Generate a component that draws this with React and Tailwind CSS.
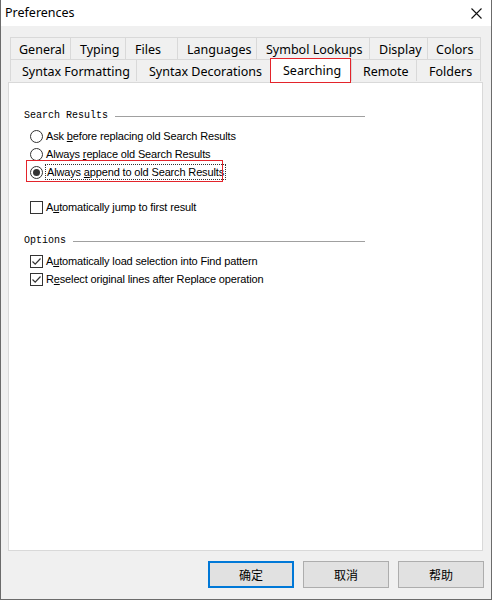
const rowOne = [
  { label: "General", w: "w-[60px]", pl: "pl-[8px]" },
  { label: "Typing", w: "w-[55px]", pl: "pl-[9px]" },
  { label: "Files", w: "w-[52px]", pl: "pl-[9px]" },
  { label: "Languages", w: "w-[79px]", pl: "pl-[9px]" },
  { label: "Symbol Lookups", w: "w-[113px]", pl: "pl-[9px]" },
  { label: "Display", w: "w-[58px]", pl: "pl-[9px]" },
  { label: "Colors", w: "w-[54px]", pl: "pl-[8px]" },
];

const rowTwo = [
  { label: "Syntax Formatting", w: "w-[126px]", pl: "pl-[11px]" },
  { label: "Syntax Decorations", w: "w-[134px]", pl: "pl-[12px]" },
  { label: "Searching", w: "w-[81px]", pl: "pl-[12px]", active: true },
  { label: "Remote", w: "w-[65px]", pl: "pl-[11px]" },
  { label: "Folders", w: "w-[65px]", pl: "pl-[12px]" },
];

const uiFont = { fontFamily: '"Noto Sans", "Liberation Sans", sans-serif' };
const dlgFont = { fontFamily: '"Liberation Sans", Arial, sans-serif' };
const monoFont = { fontFamily: '"Liberation Mono", "DejaVu Sans Mono", monospace' };
const cjkFont = { fontFamily: '"Noto Sans CJK SC", "Noto Sans", sans-serif' };

const Tab = ({ tab, last }) => {
  if (tab.active) {
    return (
      <div
        className={`${tab.w} ${tab.pl} relative z-10 -mt-[1px] -mb-[1px] h-[25px] border border-[#e3242b] bg-white flex items-center text-[12.5px] text-black`}
        style={uiFont}
      >
        <span className="pt-[1px]">{tab.label}</span>
      </div>
    );
  }
  return (
    <div
      className={`${tab.w} ${tab.pl} h-[22px] pt-[3px] border-t border-l ${last ? "border-r" : ""} border-[#d9d9d9] bg-[#f0f0f0] flex items-center text-[12.5px] text-black`}
      style={uiFont}
    >
      {tab.label}
    </div>
  );
};

const GroupHeader = ({ title }) => (
  <div className="h-[16px] flex items-center w-[341px]">
    <span className="text-[10px] leading-none text-black" style={monoFont}>
      {title}
    </span>
    <div className="flex-1 ml-[7px] h-px bg-[#a0a0a0] mt-[1px]" />
  </div>
);

const Radio = ({ checked }) => (
  <span className="w-[13px] h-[13px] rounded-full border border-[#333333] bg-white flex items-center justify-center shrink-0">
    {checked && <span className="w-[7px] h-[7px] rounded-full bg-[#333333]" />}
  </span>
);

const Check = ({ checked }) => (
  <span className="w-[13px] h-[13px] border border-[#333333] bg-white flex items-center justify-center shrink-0">
    {checked && (
      <svg width="11" height="11" viewBox="0 0 11 11">
        <path d="M1.5 5.5 L4.2 8.2 L9.5 2.5" fill="none" stroke="#333333" strokeWidth="1.2" />
      </svg>
    )}
  </span>
);

const Row = ({ children, control }) => (
  <div className="h-[18px] flex items-center pl-[6px] gap-[3px] text-[11px] tracking-[-0.15px] text-black" style={dlgFont}>
    {control}
    <span>{children}</span>
  </div>
);

const Button = ({ label, primary }) => (
  <button
    className={`w-[86px] h-[27px] bg-[#e1e1e1] text-[12px] text-black flex items-center justify-center ${
      primary ? "border-2 border-[#0078d7]" : "border border-[#adadad]"
    }`}
    style={cjkFont}
  >
    {label}
  </button>
);

export default function App() {
  return (
    <div className="w-[492px] h-[600px] flex flex-col border-l border-r border-b border-[#6b6b6b] bg-[#f0f0f0]">
      {/* TITLE BAR */}
      <div className="h-[26px] bg-white flex items-center justify-between pl-[4px] pr-[9px] shrink-0">
        <span className="text-[12.5px] text-black" style={uiFont}>
          Preferences
        </span>
        <svg width="11" height="11" viewBox="0 0 11 11">
          <path d="M0.5 0.5 L10.5 10.5 M10.5 0.5 L0.5 10.5" stroke="#111111" strokeWidth="1.1" />
        </svg>
      </div>

      {/* TABS + PANEL */}
      <div className="ml-[7px] w-[475px] pt-[11px]">
        <div className="flex ml-[2px]">
          {rowOne.map((t, i) => (
            <Tab key={t.label} tab={t} last={i === rowOne.length - 1} />
          ))}
        </div>
        <div className="flex ml-[2px]">
          {rowTwo.map((t, i) => (
            <Tab key={t.label} tab={t} last={i === rowTwo.length - 1} />
          ))}
        </div>

        <div className="h-[469px] bg-white border border-[#d9d9d9] pt-[25px] pl-[15px]">
          <GroupHeader title="Search Results" />

          <div className="mt-[3px]">
            <Row control={<Radio />}>
              Ask <u>b</u>efore replacing old Search Results
            </Row>
            <Row control={<Radio />}>
              Always <u>r</u>eplace old Search Results
            </Row>
            <div className="relative">
              <div className="absolute left-[2px] -top-[3px] w-[197px] h-[22px] border border-[#e3242b]" />
              <div className="h-[18px] flex items-center pl-[6px] gap-[2px] text-[11px] tracking-[-0.15px] text-black" style={dlgFont}>
                <Radio checked />
                <span className="border border-dotted border-[#333333] px-px leading-[14px]">
                  Always <u>a</u>ppend to old Search Results
                </span>
              </div>
            </div>
          </div>

          <div className="mt-[17px]">
            <Row control={<Check />}>
              A<u>u</u>tomatically jump to first result
            </Row>
          </div>

          <div className="mt-[17px]">
            <GroupHeader title="Options" />
          </div>

          <div className="mt-[3px]">
            <Row control={<Check checked />}>
              A<u>u</u>tomatically load selection into Find pattern
            </Row>
            <Row control={<Check checked />}>
              R<u>e</u>select original lines after Replace operation
            </Row>
          </div>
        </div>
      </div>

      {/* BUTTONS */}
      <div className="flex justify-end gap-[9px] pr-[7px] mt-[10px]">
        <Button label="确定" primary />
        <Button label="取消" />
        <Button label="帮助" />
      </div>
    </div>
  );
}
